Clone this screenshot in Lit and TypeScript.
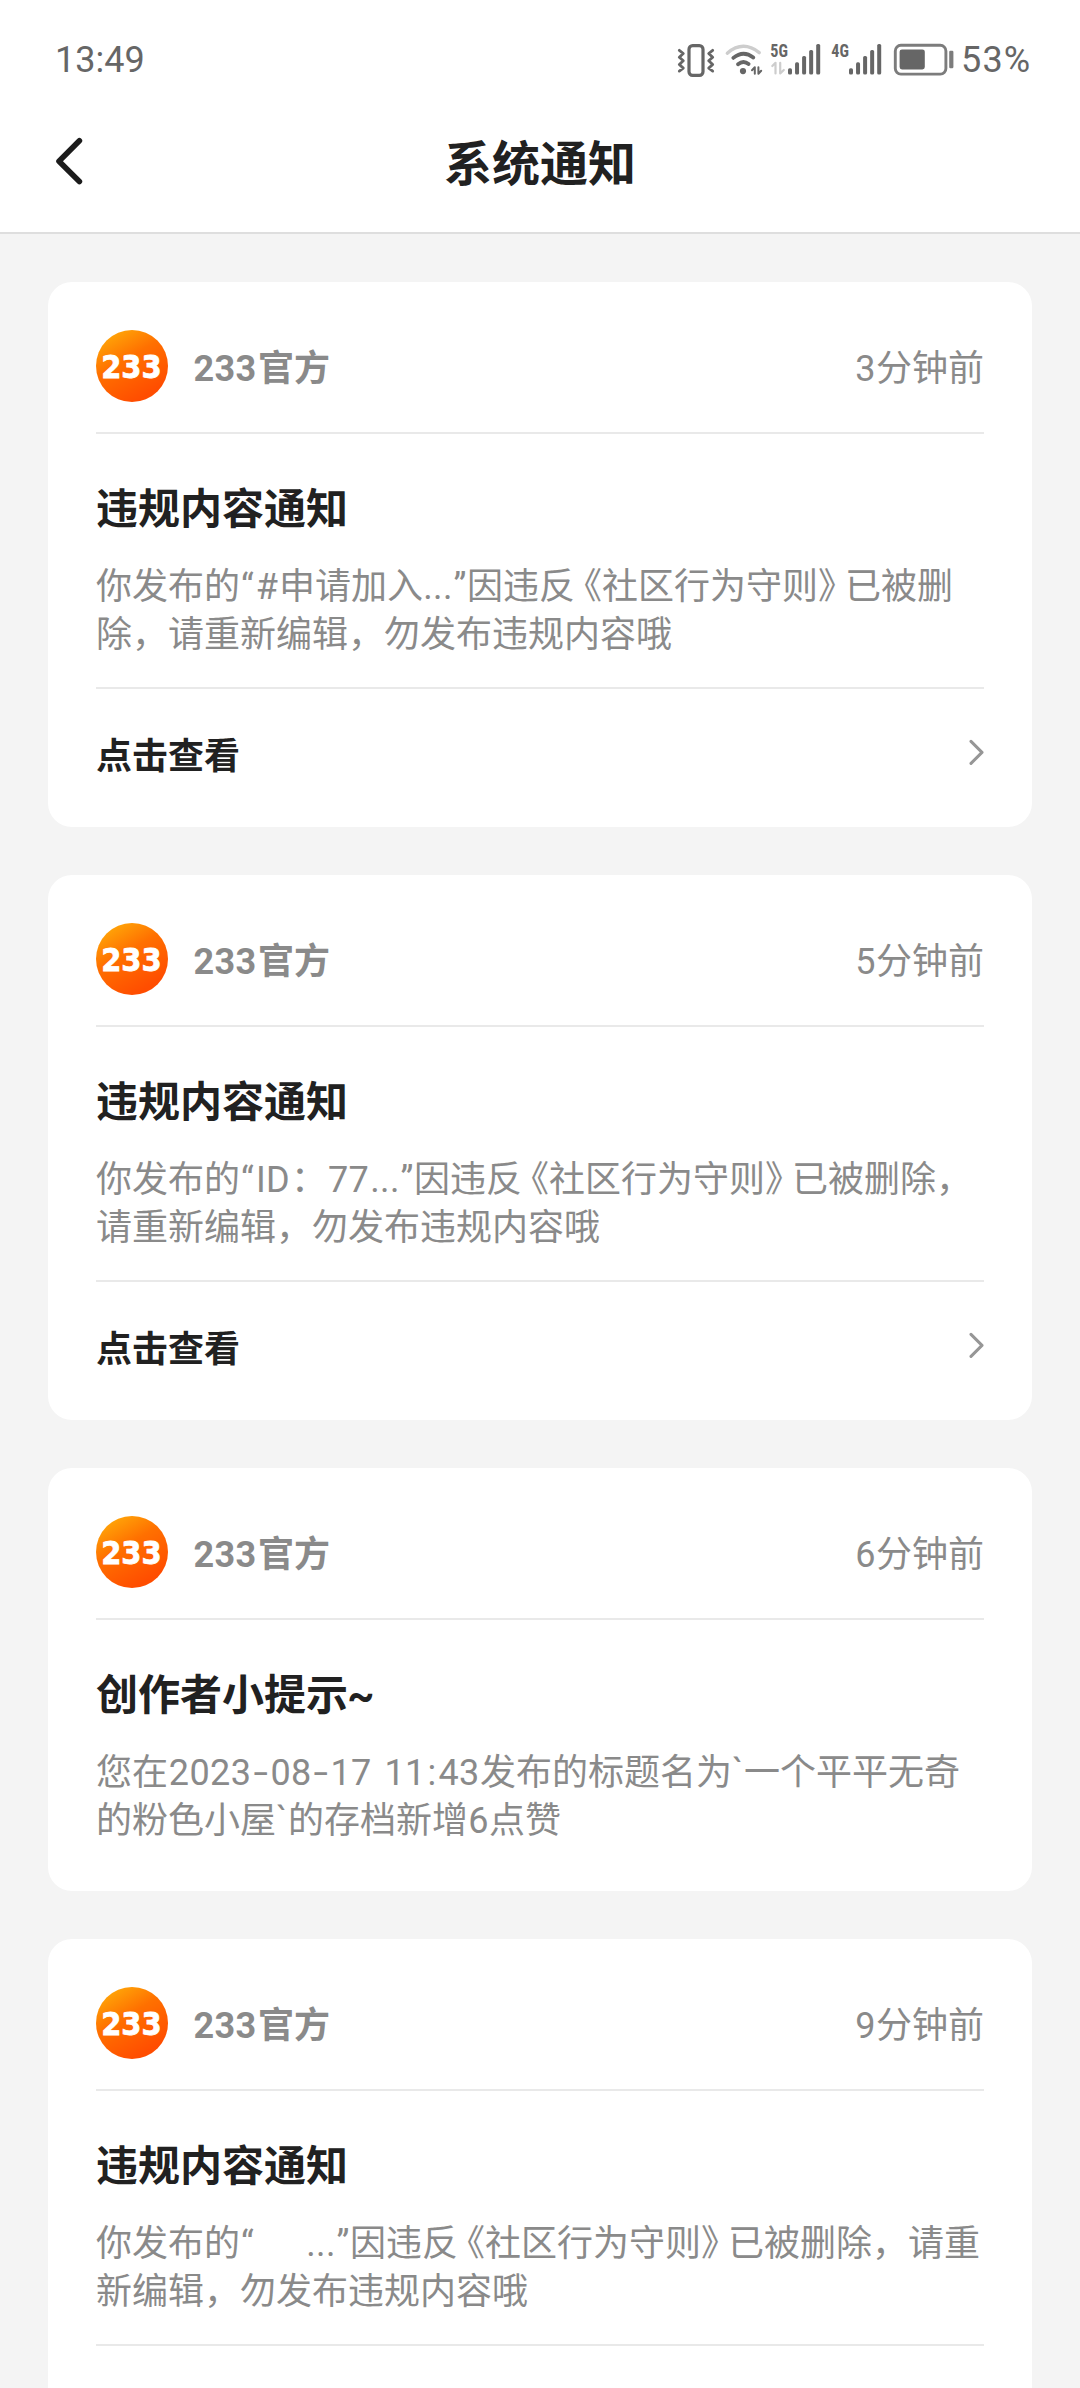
import { LitElement, html, css, svg } from "lit";
import { customElement, property } from "lit/decorators.js";
import { styleMap } from "lit/directives/style-map.js";

/** A piece of a line: plain CJK text, or a run with its own advance width in px. */
type Run = string | { t: string; w: number; kind?: "open" | "close" | "dash" };

interface Notice {
  time: string;
  title: Run[];
  body: Run[][];
  link?: string;
}

const OPEN: Run = { t: "《", w: 27, kind: "open" };
const CLOSE: Run = { t: "》", w: 27, kind: "close" };
const QUOTE: Run = { t: "“", w: 15 };
const DASH: Run = { t: "-", w: 18, kind: "dash" };
const rule: Run[] = ["因违反", OPEN, "社区行为守则", CLOSE];

const NOTICES: Notice[] = [
  {
    time: "3",
    title: ["违规内容通知"],
    body: [
      ["你发布的", QUOTE, { t: "#", w: 24 }, "申请加入", { t: "...", w: 30 }, { t: "”", w: 14 }, ...rule, "已被删"],
      ["除，请重新编辑，勿发布违规内容哦"],
    ],
    link: "点击查看",
  },
  {
    time: "5",
    title: ["违规内容通知"],
    body: [
      ["你发布的", QUOTE, { t: "ID", w: 36 }, "：", { t: "77", w: 43 }, { t: "...", w: 30 }, { t: "”", w: 14 }, ...rule, "已被删除，"],
      ["请重新编辑，勿发布违规内容哦"],
    ],
    link: "点击查看",
  },
  {
    time: "6",
    title: ["创作者小提示", { t: "~", w: 26 }],
    body: [
      [
        "您在",
        { t: "2023", w: 84 }, DASH, { t: "08", w: 42 }, DASH, { t: "17", w: 42 },
        { t: " ", w: 12 }, { t: "11", w: 42 }, { t: ":", w: 12 }, { t: "43", w: 42 },
        "发布的标题名为", { t: "`", w: 12 }, "一个平平无奇",
      ],
      ["的粉色小屋", { t: "`", w: 12 }, "的存档新增", { t: "6", w: 21 }, "点赞"],
    ],
  },
  {
    time: "9",
    title: ["违规内容通知"],
    body: [
      ["你发布的", QUOTE, { t: " ", w: 51 }, { t: "...", w: 30 }, { t: "”", w: 14 }, ...rule, "已被删除，请重"],
      ["新编辑，勿发布违规内容哦"],
    ],
    link: "点击查看",
  },
];

const renderRuns = (runs: Run[]) =>
  runs.map((r) =>
    typeof r === "string"
      ? html`<span>${r}</span>`
      : html`<span class="run ${r.kind ?? ""}" style=${styleMap({ width: `${r.w}px` })}>${r.t}</span>`,
  );

@customElement("status-bar")
class StatusBar extends LitElement {
  static styles = css`
    :host {
      display: flex;
      align-items: center;
      justify-content: space-between;
      height: 64px;
      padding: 28px 48px 0 55px;
      font: 36px/64px Roboto, sans-serif;
      color: #666;
    }
    .icons {
      display: flex;
      align-items: center;
    }
    svg {
      display: block;
    }
    .net {
      font: 700 18px "Roboto Condensed", Roboto, sans-serif;
      fill: #666;
    }
    .pct {
      width: 71px;
      white-space: nowrap;
      letter-spacing: 1.2px;
    }
  `;

  private bars(x: number) {
    return [68.3, 62.3, 56, 50, 44].map(
      (top, i) => svg`<rect x=${x + i * 7.05} y=${top} width="4" height=${74.5 - top} rx="1.6" fill="#666"/>`,
    );
  }

  render() {
    return html`
      <span>13:49</span>
      <div class="icons">
        <svg width="48" height="64" viewBox="676 28 48 64" fill="none" stroke="#666">
          <rect x="689" y="45.7" width="14" height="29.6" rx="3.6" stroke-width="3.2"/>
          <path stroke-width="2.8" stroke-linejoin="round" stroke-linecap="round"
            d="M679.3 50.3l4 3.2-4 3.7 4 3.6-4 3.7 4 3.6-4 3M712.7 50.3l-4 3.2 4 3.7-4 3.6 4 3.7-4 3.6 4 3"/>
        </svg>
        <svg width="45" height="64" viewBox="724 28 45 64" fill="none" stroke-linecap="round">
          <path d="M727.3 53.2Q743 39.8 759.2 52.6" stroke="#cdcdcd" stroke-width="3.4"/>
          <path d="M733.3 57.9Q743.4 49.6 753.3 57.6" stroke="#666" stroke-width="3.8"/>
          <path d="M738 64.3Q743.4 59.9 748.6 64.1" stroke="#666" stroke-width="3.8"/>
          <circle cx="743" cy="71.1" r="3.1" fill="#666"/>
          <path d="M752 70.3l2.8-3v6.4M758.4 67.3v6.4l2.8-3" stroke="#666" stroke-width="2" stroke-linejoin="round"/>
        </svg>
        <svg width="61" height="64" viewBox="769 28 61 64">
          <text class="net" x="770.3" y="57.4" textLength="17.6" lengthAdjust="spacingAndGlyphs">5G</text>
          <path d="M772.3 66l3.2-3.2v10.6M780.2 62.8v10.6l3.6-3.4" fill="none" stroke="#cdcdcd" stroke-width="2.2" stroke-linejoin="round" stroke-linecap="round"/>
          ${this.bars(788)}
        </svg>
        <svg width="63" height="64" viewBox="830 28 63 64">
          <text class="net" x="831.3" y="57.4" textLength="17.6" lengthAdjust="spacingAndGlyphs">4G</text>
          ${this.bars(849)}
        </svg>
        <svg width="68" height="64" viewBox="893 28 68 64">
          <rect x="895.3" y="45.3" width="50.6" height="28.8" rx="5.6" fill="none" stroke="#7c7c7c" stroke-width="2.9"/>
          <rect x="899.6" y="49.4" width="25.2" height="20" rx="2.4" fill="#666"/>
          <rect x="949.2" y="50.7" width="4.2" height="17.6" rx="1.2" fill="#7c7c7c"/>
        </svg>
        <span class="pct">53%</span>
      </div>
    `;
  }
}

@customElement("notice-card")
class NoticeCard extends LitElement {
  @property({ attribute: false }) notice!: Notice;

  static styles = css`
    :host {
      display: block;
      padding: 48px 48px 0;
      border-radius: 24px;
      background: #fff;
      color: #8a8a8a;
      font-size: 36px;
      line-height: 48px;
    }
    .head {
      display: flex;
      align-items: center;
      height: 72px;
      padding-bottom: 30px;
      border-bottom: 2px solid #e9e9e9;
    }
    .avatar {
      flex: none;
      margin-right: 24px;
    }
    .logo {
      font: 700 32px "DejaVu Sans", sans-serif;
      fill: #fff;
      stroke: #fff;
      stroke-width: 0.8;
    }
    .name,
    .time {
      margin-bottom: 2px;
      white-space: nowrap;
    }
    .name {
      flex: 1;
      font-weight: 700;
    }
    .title {
      margin: 44px 0 25px;
      font-size: 42px;
      line-height: 56px;
      font-weight: 700;
      color: #212121;
      white-space: nowrap;
    }
    .line {
      height: 48px;
      white-space: nowrap;
    }
    .run {
      display: inline-flex;
      justify-content: center;
      line-height: 1;
      white-space: pre;
      font-family: Roboto, "Noto Sans CJK SC", sans-serif;
      letter-spacing: 0.4px;
    }
    .open,
    .close {
      font-family: "Noto Sans CJK SC", sans-serif;
      font-feature-settings: "halt";
      letter-spacing: 0;
    }
    .open {
      justify-content: flex-end;
    }
    .close {
      justify-content: flex-start;
    }
    .dash {
      transform: scaleX(1.45);
    }
    .foot {
      display: flex;
      align-items: center;
      justify-content: space-between;
      margin-top: 32px;
      padding: 40px 0 50px;
      border-top: 2px solid #e9e9e9;
      font-weight: 700;
      color: #212121;
    }
    .space {
      height: 50px;
    }
  `;

  render() {
    const n = this.notice;
    return html`
      <div class="head">
        <svg class="avatar" width="72" height="72" viewBox="0 0 72 72">
          <defs>
            <linearGradient id="g" x1="0.12" y1="0.1" x2="0.62" y2="0.95">
              <stop offset="0" stop-color="#ffa508"/>
              <stop offset="0.42" stop-color="#ff7000"/>
              <stop offset="1" stop-color="#ff4d00"/>
            </linearGradient>
          </defs>
          <circle cx="36" cy="36" r="36" fill="url(#g)"/>
          <text class="logo" x="5.2" y="48" textLength="60.5" lengthAdjust="spacingAndGlyphs">233</text>
        </svg>
        <div class="name">${renderRuns([{ t: "233", w: 66 }, "官方"])}</div>
        <div class="time">${renderRuns([{ t: n.time, w: 21 }, "分钟前"])}</div>
      </div>
      <div class="title">${renderRuns(n.title)}</div>
      ${n.body.map((l) => html`<div class="line">${renderRuns(l)}</div>`)}
      ${n.link
        ? html`<div class="foot">
            <span>${n.link}</span>
            <svg width="16" height="48" viewBox="0 0 16 48" fill="none" stroke="#969696"
              stroke-width="3" stroke-linecap="round" stroke-linejoin="round">
              <path d="M3 12.4L14 23.4 3 34.4"/>
            </svg>
          </div>`
        : html`<div class="space"></div>`}
    `;
  }
}

@customElement("app-root")
class AppRoot extends LitElement {
  static styles = css`
    :host {
      display: block;
      height: 2388px;
      overflow: hidden;
      background: #f4f4f4;
      font-family: "Noto Sans CJK SC", sans-serif;
    }
    .top {
      background: #fff;
      border-bottom: 2px solid #dedede;
    }
    .nav {
      display: grid;
      grid-template-columns: 1fr auto 1fr;
      align-items: center;
      height: 140px;
      padding: 0 52px;
    }
    .nav h1 {
      margin: 0 0 4px;
      font-size: 48px;
      line-height: 64px;
      font-weight: 700;
      color: #212121;
    }
    .list {
      display: flex;
      flex-direction: column;
      gap: 48px;
      padding: 48px;
    }
  `;

  render() {
    return html`
      <div class="top">
        <status-bar></status-bar>
        <div class="nav">
          <svg width="32" height="52" viewBox="52 136 32 52" fill="none" stroke="#1c1c1c"
            stroke-width="5.6" stroke-linecap="round" stroke-linejoin="round">
            <path d="M79.4 140.8L59 161.3 79.4 181.6"/>
          </svg>
          <h1>系统通知</h1>
          <span></span>
        </div>
      </div>
      <div class="list">${NOTICES.map((n) => html`<notice-card .notice=${n}></notice-card>`)}</div>
    `;
  }
}
